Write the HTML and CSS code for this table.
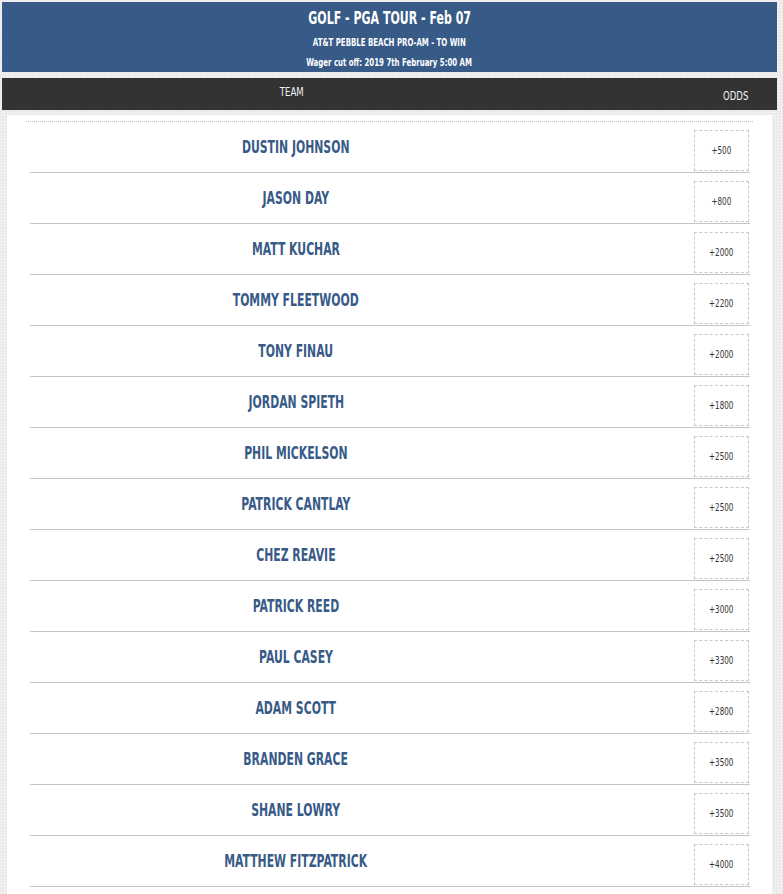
FILE: index.html
```html
<!DOCTYPE html>
<html>
<head>
<meta charset="utf-8">
<link rel="stylesheet" href="styles.css">
</head>
<body>
<header class="banner">
  <h1 class="title"><span class="nar">GOLF - PGA TOUR - Feb 07</span></h1>
  <p class="sub"><span class="nar">AT&amp;T PEBBLE BEACH PRO-AM - TO WIN</span></p>
  <p class="sub"><span class="nar">Wager cut off: 2019 7th February 5:00 AM</span></p>
</header>
<div class="colbar">
  <span class="col-team"><span class="nar">TEAM</span></span>
  <span class="col-odds"><span class="nar right">ODDS</span></span>
</div>
<main class="panel">
  <div class="table">
    <div class="row"><div class="name"><span class="nar">DUSTIN JOHNSON</span></div><div class="odds"><span class="box"><span class="nar">+500</span></span></div></div>
    <div class="row"><div class="name"><span class="nar">JASON DAY</span></div><div class="odds"><span class="box"><span class="nar">+800</span></span></div></div>
    <div class="row"><div class="name"><span class="nar">MATT KUCHAR</span></div><div class="odds"><span class="box"><span class="nar">+2000</span></span></div></div>
    <div class="row"><div class="name"><span class="nar">TOMMY FLEETWOOD</span></div><div class="odds"><span class="box"><span class="nar">+2200</span></span></div></div>
    <div class="row"><div class="name"><span class="nar">TONY FINAU</span></div><div class="odds"><span class="box"><span class="nar">+2000</span></span></div></div>
    <div class="row"><div class="name"><span class="nar">JORDAN SPIETH</span></div><div class="odds"><span class="box"><span class="nar">+1800</span></span></div></div>
    <div class="row"><div class="name"><span class="nar">PHIL MICKELSON</span></div><div class="odds"><span class="box"><span class="nar">+2500</span></span></div></div>
    <div class="row"><div class="name"><span class="nar">PATRICK CANTLAY</span></div><div class="odds"><span class="box"><span class="nar">+2500</span></span></div></div>
    <div class="row"><div class="name"><span class="nar">CHEZ REAVIE</span></div><div class="odds"><span class="box"><span class="nar">+2500</span></span></div></div>
    <div class="row"><div class="name"><span class="nar">PATRICK REED</span></div><div class="odds"><span class="box"><span class="nar">+3000</span></span></div></div>
    <div class="row"><div class="name"><span class="nar">PAUL CASEY</span></div><div class="odds"><span class="box"><span class="nar">+3300</span></span></div></div>
    <div class="row"><div class="name"><span class="nar">ADAM SCOTT</span></div><div class="odds"><span class="box"><span class="nar">+2800</span></span></div></div>
    <div class="row"><div class="name"><span class="nar">BRANDEN GRACE</span></div><div class="odds"><span class="box"><span class="nar">+3500</span></span></div></div>
    <div class="row"><div class="name"><span class="nar">SHANE LOWRY</span></div><div class="odds"><span class="box"><span class="nar">+3500</span></span></div></div>
    <div class="row"><div class="name"><span class="nar">MATTHEW FITZPATRICK</span></div><div class="odds"><span class="box"><span class="nar">+4000</span></span></div></div>
  </div>
</main>
</body>
</html>
```
FILE: styles.css
```css
html, body {
  margin: 0;
  padding: 0;
}
body {
  background-color: #e9e9e9;
  background-image: radial-gradient(circle, #f6f6f6 0.8px, transparent 1.2px);
  background-size: 3px 3px;
  font-family: "DejaVu Sans Condensed", "DejaVu Sans", sans-serif;
  font-stretch: condensed;
  padding: 2px 6px 0 2px;
  overflow: hidden;
}
.nar {
  display: inline-block;
  white-space: nowrap;
  transform: scaleX(0.74);
  transform-origin: center;
}
.nar.right {
  transform-origin: right center;
}
.banner {
  background: #375a87;
  color: #fff;
  text-align: center;
  height: 70px;
  display: flex;
  flex-direction: column;
  align-items: center;
  padding-top: 6px;
  box-sizing: border-box;
}
.title {
  margin: 0;
  font-size: 18px;
  font-weight: bold;
  line-height: 20px;
}
.title .nar {
  transform: scaleX(0.68);
}
.sub {
  margin: 0;
  font-size: 10.5px;
  font-weight: bold;
  line-height: 12px;
  margin-top: 8px;
}
.sub .nar {
  transform: scaleX(0.74);
}
.colbar {
  margin-top: 6px;
  height: 32px;
  background: #333;
  color: #f2f2f2;
  font-size: 12.5px;
  display: grid;
  grid-template-columns: 580px 1fr;
}
.col-team {
  text-align: center;
  padding-top: 6px;
}
.col-odds {
  text-align: right;
  padding-right: 29px;
  padding-top: 10px;
}
.colbar .nar {
  transform: scaleX(0.76);
}
.colbar .nar.right {
  transform: scaleX(0.76);
  transform-origin: right center;
}
.panel {
  margin: 5px 5px 0 5px;
  background: #fff;
  padding: 6px 19px 0 19px;
  height: 800px;
}
.table {
  border-top: 1px dotted #bbb;
}
.row {
  display: grid;
  grid-template-columns: 532px 1fr;
  margin: 0 3px 0 4px;
  height: 50px;
  border-bottom: 1px solid #c4c4c4;
  align-items: center;
}
.name {
  text-align: center;
  color: #375a87;
  font-weight: bold;
  font-size: 17px;
  padding-top: 0;
}
.name .nar {
  transform: scaleX(0.71);
}
.odds {
  display: flex;
  justify-content: flex-end;
  padding-right: 1px;
}
.box {
  width: 53px;
  height: 39px;
  border: 1px dashed #c8c8c8;
  display: flex;
  align-items: center;
  justify-content: center;
  font-size: 10px;
  color: #333;
  margin-top: 6px;
}
.box .nar {
  transform: scaleX(0.8);
}
```
